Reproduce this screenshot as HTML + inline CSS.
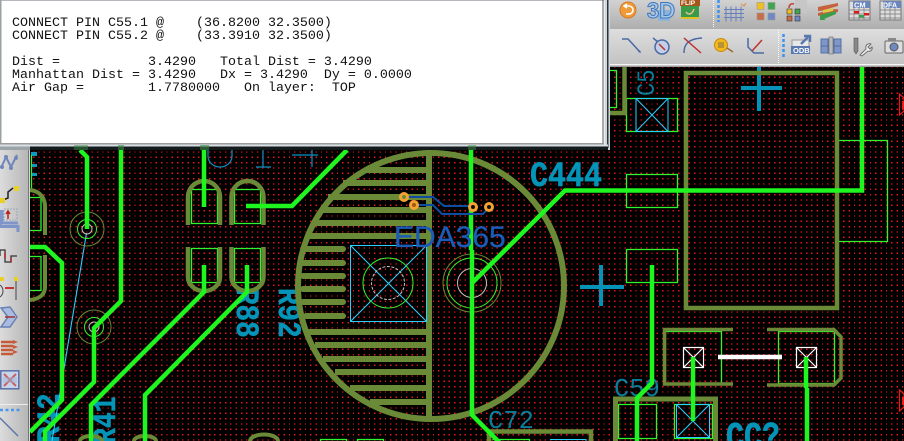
<!DOCTYPE html>
<html><head><meta charset="utf-8"><style>
html,body{margin:0;padding:0;background:#000}
#r{position:relative;width:904px;height:441px;overflow:hidden}
svg{position:absolute;left:0;top:0}
pre{position:absolute;left:12px;top:17px;margin:0;font:13.33px/13px "Liberation Mono",monospace;color:#111}
</style></head><body><div id="r">
<svg width="904" height="441" viewBox="0 0 904 441" font-family="Liberation Mono, monospace">
<defs>
<linearGradient id="tb1" x1="0" y1="0" x2="0" y2="1"><stop offset="0" stop-color="#d2d2d2"/><stop offset="1" stop-color="#aeaeae"/></linearGradient>
<linearGradient id="tb2" x1="0" y1="0" x2="0" y2="1"><stop offset="0" stop-color="#dedede"/><stop offset="1" stop-color="#c2c2c2"/></linearGradient>
<linearGradient id="lb" x1="0" y1="0" x2="1" y2="0"><stop offset="0" stop-color="#dcdcdc"/><stop offset="1" stop-color="#b6b6b6"/></linearGradient>
</defs>
<rect width="904" height="441" fill="#000"/>
<path fill="none" stroke="#f01018" stroke-width="1.4" stroke-dasharray="1.4 3.93" shape-rendering="crispEdges" d="M33 66.7H904M33 72H904M33 77.3H904M33 82.7H904M33 88H904M33 93.3H904M33 98.7H904M33 104H904M33 109.3H904M33 114.7H904M33 120H904M33 125.3H904M33 130.7H904M33 136H904M33 141.3H904M33 146.7H904M33 152H904M33 157.3H904M33 162.7H904M33 168H904M33 173.3H904M33 178.7H904M33 184H904M33 189.3H904M33 194.7H904M33 200H904M33 205.3H904M33 210.7H904M33 216H904M33 221.3H904M33 226.7H904M33 232H904M33 237.3H904M33 242.7H904M33 248H904M33 253.3H904M33 258.7H904M33 264H904M33 269.3H904M33 274.7H904M33 280H904M33 285.3H904M33 290.7H904M33 296H904M33 301.3H904M33 306.7H904M33 312H904M33 317.3H904M33 322.7H904M33 328H904M33 333.3H904M33 338.7H904M33 344H904M33 349.3H904M33 354.7H904M33 360H904M33 365.3H904M33 370.7H904M33 376H904M33 381.3H904M33 386.7H904M33 392H904M33 397.3H904M33 402.7H904M33 408H904M33 413.3H904M33 418.7H904M33 424H904M33 429.3H904M33 434.7H904M33 440H904"/>

<!-- teal labels -->
<g fill="#0494b8" font-weight="bold" stroke="#0494b8" stroke-width=".4">
<text transform="translate(530,186) scale(1.25,1.45)" font-size="24">C444</text>
<text transform="translate(237,288) rotate(90) scale(1.15,1.35)" font-size="24">R88</text>
<text transform="translate(279,288) rotate(90) scale(1.15,1.35)" font-size="24">R92</text>
<text transform="translate(115,444) rotate(-90) scale(1.1,1.35)" font-size="24">R41</text>
<text transform="translate(59,443) rotate(-90) scale(1.15,1.35)" font-size="24">R42</text>
<text transform="translate(726,448) scale(1.25,1.6)" font-size="24">CC?</text>
</g>
<g fill="#0a9cc0" fill-opacity=".8">
<text transform="translate(488,428) scale(1.5,1.55)" font-size="17">C72</text>
<text transform="translate(614,396) scale(1.5,1.55)" font-size="17">C59</text>
<text transform="translate(654,96) rotate(-90) scale(1.3,1.45)" font-size="17">C5</text>
</g>
<g fill="none" stroke="#0b8fc4" stroke-width="1.2">
<path d="M208 150v6a12 11 0 0 0 24 0v-6"/><path d="M263 150v17M256 167h15"/><path d="M292 155h26M312 150v17"/>
</g>
<path d="M31 152h6v4h-6zM31 164h6v3h-6zM31 173h6v3h-6z" fill="#0a9cc0"/>
<path d="M741 88h41M759 67v44M580 287h44M601 265v41" fill="none" stroke="#0494b8" stroke-width="4"/>

<!-- thin green -->
<g fill="none" stroke="#2ff52f" stroke-width="1.3">
<path d="M191.500 189.500h26v34h-26zM234.500 189.500h26v34h-26zM191.500 248.500h26v34h-26zM234.500 248.500h26v34h-26z"/>
<path d="M626.500 98.500h51v33h-51zM626.500 174.500h51v33h-51zM626.500 249.500h51v33h-51z"/>
<path d="M836.500 140.500h51v101h-51z"/>
<path d="M606 70.500h10.500v37H606"/>
<path d="M30 197.500h11v33H30M30 256.500h11v34H30M31.500 155v35"/>
<path d="M665.500 331.500h56v52h-56zM778.500 331.500h56v52h-56z"/>
<path d="M618.500 404.500h38v34h-38zM674.500 404.500h38v34h-38zM492.500 439.500h37v6M320.500 439.500h26v6h-26zM357.500 439.500h26v6h-26z"/>
</g>

<!-- olive -->
<g fill="none" stroke="#6a8a37">
<circle cx="431" cy="286" r="133" stroke-width="6"/>
<path d="M429 150V418" stroke-width="6"/>
<path stroke-width="6" d="M367 170H429M343 183H429M328 197H429M320 210H429M313 223H429M307 236H429M307 332H429M315 345H429M323 359H429M335 372H429M350 388H429M370 402H429"/>
<path stroke-width="6" stroke-linecap="round" d="M306 249H343M303 263H343M303 276H343M303 289H343M303 302H343M306 316H343"/>
<path stroke-width="4.500" d="M188 225V197a16 16 0 0 1 32 0V225M231.500 225V197a16 16 0 0 1 32 0V225"/>
<path stroke-width="4.500" d="M188 247v30a16 14 0 0 0 32 0V247M231.500 247v30a16 14 0 0 0 32 0V247"/>
<path stroke-width="4.500" d="M686 308V73H837V308ZM624.500 67V113H608"/>
<path stroke-width="4" d="M30 190c10 1 16 8 15 20v25M45 255v32c0 8-6 12-15 13"/>
<path stroke-width="3.500" d="M733 329.500H664.500V384H733M767 329.500H834L841 337V378L834 385H767"/>
<path stroke-width="5" d="M615.500 445V399H715.500V445"/>
<path stroke-width="4.500" d="M489 445V431.500H591V445"/>
<path stroke-width="4" d="M80 441a11 5 0 0 1 22 0M134 441a11 5 0 0 1 22 0M250 441a13 6 0 0 1 28 0"/>
</g>

<!-- cyan squares -->
<g fill="none" stroke="#2ad0ff" stroke-width="1">
<path d="M350.500 245.500h76v76h-76zM350.500 245.500l76 76M426.500 245.500l-76 76"/>
<path d="M636 98.500h32v33h-32zM636 98.500l32 33M668 98.500l-32 33"/>
<path d="M676.500 404.500h33v33h-33zM676.500 404.500l33 33M709.500 404.500l-33 33"/>
<path d="M550 439.500h36v6"/>
<path d="M86.500 233L52 441" stroke-width="1.100"/>
</g>

<!-- via rings -->
<g fill="none" stroke-width="1">
<circle cx="388" cy="283" r="25" stroke="#33f533"/>
<circle cx="388" cy="283" r="16.500" stroke="#c8c0c0" stroke-dasharray="3 1.500"/>
<circle cx="472" cy="283" r="29" stroke="#6a8a37"/>
<circle cx="472" cy="283" r="25" stroke="#33f533"/>
<circle cx="472" cy="283" r="14.500" stroke="#c8c0c0"/>
<circle cx="87" cy="229" r="17" stroke="#6a8a37"/>
<circle cx="87" cy="229" r="9.500" stroke="#33f533"/>
<circle cx="87" cy="229" r="5" stroke="#c8c0c0"/>
<circle cx="94" cy="327" r="17" stroke="#6a8a37"/>
<circle cx="94" cy="327" r="9.500" stroke="#33f533"/>
<circle cx="94" cy="327" r="5" stroke="#c8c0c0"/>
</g>

<!-- white pads -->
<g fill="none" stroke="#fff" stroke-width="1.200">
<path d="M683.500 347.500h20v20h-20zM683.500 347.500l20 20M703.500 347.500l-20 20"/>
<path d="M796.500 347.500h20v20h-20zM796.500 347.500l20 20M816.500 347.500l-20 20"/>
</g>

<!-- tracks -->
<g fill="none" stroke="#1ff51f" stroke-width="4.500" stroke-linejoin="miter">
<path d="M471 150V250M472 250V415L500 443"/>
<path d="M472 283L565 190.500H862V67"/>
<path d="M246 206H292L347 150"/>
<path d="M204 150V207M121 150V301L94 328V382L45 431V441M80 150L87 157V229"/>
<path d="M30 247H45L62 263V400L30 432"/>
<path d="M204 265V292L91 405V441M247 265V292L145 395V441"/>
<path d="M652 265V383L637 398V441M693 357V421M806 357V388M807 388V441"/>
</g>
<path d="M718 357H782" stroke="#fff" stroke-width="4.500"/>

<!-- red markers -->
<g fill="none" stroke="#f01818" stroke-width="1.200"><path d="M899.500 94v21l4.500-4V98zM899.500 390v21l4.500-4v-13z"/></g>
<path d="M902 101h2v8h-2zM902 397h2v8h-2z" fill="#f01818"/>

<!-- EDA365 logo -->
<g fill="none" stroke="#0d4ea3" stroke-width="2"><path d="M404 197H433L444 206H473M414 205H433L442 214H483L489 207"/></g>
<g fill="#111" stroke="#f5a233" stroke-width="3"><circle cx="404" cy="197" r="3.500" fill="#6a8a37"/><circle cx="414" cy="205" r="3.500" fill="#a05a10"/><circle cx="473" cy="207" r="3.500"/><circle cx="489" cy="207" r="3.500"/></g>
<text x="394" y="247" font-family="Liberation Sans, sans-serif" font-size="30" fill="#1a5cb8" stroke="#1a5cb8" stroke-width=".3">EDA365</text>

<!-- left toolbar -->
<rect x="0" y="146" width="28" height="295" fill="url(#lb)"/>
<rect x="28" y="146" width="1" height="295" fill="#777"/>
<rect x="29" y="146" width="1" height="295" fill="#d8d8d8"/>
<path d="M1 168L6 157L11 167L17 155" fill="none" stroke="#6f86ba" stroke-width="2"/>
<g fill="#6f86ba"><circle cx="2" cy="167" r="2"/><circle cx="11" cy="168" r="2"/><circle cx="16" cy="158" r="2"/><circle cx="6" cy="157" r="2"/></g>
<path d="M3 200L8 198V192L13 188" fill="none" stroke="#222" stroke-width="1.500"/>
<rect x="0" y="198" width="5" height="5" fill="#e8d028"/><rect x="14" y="186" width="5" height="5" fill="#e8d028"/>
<path d="M0 210V226.500H18V232M2 210V223H18" fill="none" stroke="#7d95c8" stroke-width="3"/>
<rect x="4" y="209" width="13" height="11" fill="none" stroke="#9ab" stroke-dasharray="2 1"/>
<path d="M8 219v-7m-2 2l2-3 2 3" fill="none" stroke="#b82020" stroke-width="1.500"/>
<path d="M0 256V250H5V262H11V256H17" fill="none" stroke="#333" stroke-width="1.300"/>
<path d="M5 253v5M11 258v4" stroke="#b82020" stroke-width="1.500"/>
<rect x="0" y="277" width="4" height="4" fill="#e8d028"/><rect x="14" y="277" width="4" height="4" fill="#e8d028"/>
<path d="M0 285C4 288 4 294 0 297M16 281V300" fill="none" stroke="#444" stroke-width="1"/>
<path d="M5 288H14" stroke="#c02525" stroke-width="1.800"/>
<path d="M1 308L10 307L17 317L10 327H1L8 317Z" fill="#a9bce0" stroke="#6880b4" stroke-width="1.500"/>
<path d="M5 317h10" stroke="#a03030" stroke-width="1.500"/>
<g stroke="#c75a38" stroke-width="2.500"><path d="M1 342H13M1 346H13M1 350H13M1 354H13"/></g>
<path d="M13 340l5 2-5 2zM13 345l5 2-5 2zM13 350l5 2-5 2z" fill="#c75a38"/>
<rect x="0.800" y="370.800" width="18" height="18" fill="#c8d4ea" stroke="#5670a8" stroke-width="1.500"/>
<path d="M4 374L16 386M16 374L4 386" stroke="#c86060" stroke-width="2"/>
<rect x="3" y="377" width="14" height="6" fill="#9fb3d6" opacity=".5"/>
<rect x="0" y="404" width="28" height="1" fill="#eee"/>
<path d="M0 410h20" stroke="#4a96ee" stroke-width="2.500" stroke-dasharray="3 2.500"/>
<path d="M0 418L18 436" stroke="#5c78a8" stroke-width="1.500"/>

<!-- top toolbar -->
<rect x="604" y="0" width="300" height="29" fill="url(#tb1)"/>
<rect x="604" y="29" width="300" height="36" fill="url(#tb2)"/>
<rect x="604" y="64" width="300" height="1.500" fill="#f4f4f4"/>
<rect x="604" y="65.500" width="300" height="1.500" fill="#9d9d9d"/>
<path d="M713.500 0V28M778.500 30V64" stroke="#fff" stroke-dasharray="1 1"/>
<path d="M718.500 0V22M783.500 34V58" stroke="#3a93f0" stroke-width="2.500" stroke-dasharray="3 2"/>
<!-- row1 -->
<circle cx="628" cy="10" r="8" fill="#ef9b3a" stroke="#d87a20"/>
<path d="M625 6h4a4 4 0 0 1 0 8h-3M627 4l-3 2 3 2" fill="none" stroke="#fff" stroke-width="1.600"/>
<rect x="658" y="10" width="12" height="11" fill="#8fb4dc"/>
<text x="647" y="18" font-size="22" font-weight="bold" font-family="Liberation Sans, sans-serif" fill="#a8c6e8" stroke="#3d78bc" stroke-width="1">3D</text>
<rect x="680" y="0" width="20" height="6" fill="#a85518"/>
<text x="681" y="5" font-size="6.500" font-weight="bold" fill="#fff" font-family="Liberation Sans, sans-serif">FLIP</text>
<rect x="681" y="6" width="18" height="11" fill="#3a9a48"/>
<path d="M686 12c2 3 6 3 8-3" fill="none" stroke="#e4c090" stroke-width="1.500"/>
<rect x="681" y="17" width="18" height="2" fill="#e0c020"/>
<path d="M726 6.500V21.500M731 6.500V21.500M736 6.500V21.500M741 6.500V21.500M724 9.500H744M724 13.500H744M724 17.500H744" stroke="#6580bc" stroke-width="1"/>
<path d="M741 4l3 2 2-3" fill="none" stroke="#d98c3c"/>
<rect x="757" y="2.500" width="7" height="7" fill="#f0c020" stroke="#999" stroke-width=".6"/>
<rect x="768" y="2.500" width="7" height="7" fill="#3fa54e" stroke="#999" stroke-width=".6"/>
<rect x="757" y="13" width="7" height="7" fill="#c96c47" stroke="#999" stroke-width=".6"/>
<rect x="768" y="13" width="7" height="7" fill="#7088c4" stroke="#999" stroke-width=".6"/>
<rect x="795" y="0" width="12" height="13" fill="#c6c6c6"/>
<rect x="787" y="9" width="5" height="5" fill="#f0c020" stroke="#333" stroke-width=".6"/><rect x="795" y="9" width="5" height="5" fill="#3fa54e" stroke="#333" stroke-width=".6"/>
<rect x="787" y="16" width="5" height="5" fill="#c96c47" stroke="#333" stroke-width=".6"/><rect x="795" y="16" width="5" height="5" fill="#7088c4" stroke="#333" stroke-width=".6"/>
<path d="M789 8c0-3 2-5 5-4" fill="none" stroke="#c04040" stroke-width="1.500"/>
<path d="M818 7L838 3V6L824 10L838 9V12L818 16V13L832 10L818 11Z" fill="#c6613f"/><path d="M820 15L836 11V14L824 19L826 20H820Z" fill="#3d9c4a"/><path d="M823 10L833 8V11L823 13Z" fill="#e0c84a"/>
<rect x="849" y="1" width="21" height="19" fill="#ddd" stroke="#777"/><rect x="853" y="1" width="17" height="7" fill="#6b86bc"/>
<text x="854" y="7.500" font-size="7.500" font-weight="bold" fill="#fff" font-family="Liberation Sans, sans-serif">CM</text>
<path d="M849 10h21M849 14h21M849 18h21M854 8v12M859 8v12M864 8v12" stroke="#777" stroke-width=".7"/>
<rect x="854" y="11" width="5" height="2.500" fill="#e01818"/><rect x="864" y="13" width="5" height="2.500" fill="#e01818"/><rect x="859" y="15" width="5" height="2.500" fill="#38a048"/>
<rect x="880" y="1" width="21" height="19" fill="#ddd" stroke="#777"/><rect x="883" y="1" width="18" height="7" fill="#6b86bc"/>
<text x="883" y="7.500" font-size="7" font-weight="bold" fill="#fff" font-family="Liberation Sans, sans-serif">DFA</text>
<path d="M880 10h21M880 14h21M880 18h21M885 8v12M890 8v12M895 8v12" stroke="#777" stroke-width=".7"/>
<!-- row2 -->
<path d="M622 39H628L640 52" fill="none" stroke="#4a6aa5" stroke-width="1.500"/><path d="M641 53l-3-1 2-2z" fill="#4a6aa5"/>
<path d="M653 38l5 4" stroke="#4a6aa5" stroke-width="1.500"/><circle cx="662" cy="47" r="7" fill="#c4cee6" stroke="#4a6aa5" stroke-width="1.500"/><path d="M659 44l6 6" stroke="#b93030" stroke-width="1.500"/>
<path d="M684 53c0-8 3-14 18-15" fill="none" stroke="#4a6aa5" stroke-width="1.500"/><path d="M684 38l17 15" stroke="#b93030" stroke-width="1.500"/>
<circle cx="721" cy="45" r="6.500" fill="#f2b81c" stroke="#c88a10"/><path d="M718 43h6M718 45h6M718 47h6" stroke="#555" stroke-width=".8"/><path d="M727 48l6 4" stroke="#9a6a30" stroke-width="1.500"/>
<path d="M748 38V47L754 53H764" fill="none" stroke="#4a6aa5" stroke-width="1.500"/><path d="M752 51L762 40" stroke="#c03030" stroke-width="1.500"/>
<rect x="792" y="40" width="17" height="9" fill="#e8e8e8" stroke="#999"/><rect x="791" y="46" width="19" height="8" fill="#5a78b0"/>
<text x="793" y="53" font-size="7.500" font-weight="bold" fill="#fff" font-family="Liberation Sans, sans-serif">ODB</text>
<path d="M801 44L808 37M804 36h6v6" fill="none" stroke="#5a78b0" stroke-width="2.500"/>
<rect x="821" y="39" width="20" height="14" fill="#7f97c6" stroke="#5670a8"/><path d="M828 39v14M834 39v14M821 46h20" stroke="#4a6299" stroke-width=".8"/><rect x="829" y="37" width="4" height="17" fill="#bbb" stroke="#666" stroke-width=".6"/>
<path d="M854 38h4v13l-2 3-2-3z" fill="#888" stroke="#555" stroke-width=".6"/>
<path d="M860 55L866 49C865 45 868 43 871 44L868 47L870 49L872 47C873 50 870 52 868 51L862 56Z" fill="#f0f0f0" stroke="#666" stroke-width=".9"/>
<rect x="885" y="41" width="18" height="12" rx="1" fill="#ddd" stroke="#666"/><circle cx="894" cy="47" r="4" fill="#6f8ac0" stroke="#555"/><rect x="888" y="38" width="8" height="3" fill="#888"/>

<!-- dialog frame -->
<rect x="600" y="0" width="10" height="150" fill="#cfd6dc"/>
<rect x="604" y="0" width="1" height="146" fill="#e8eef2"/>
<rect x="607" y="0" width="1.500" height="148" fill="#2c3236"/>
<rect x="0" y="0" width="604" height="144" fill="#fff"/>
<rect x="0" y="0" width="604" height="1" fill="#b4b8bc"/>
<rect x="0" y="0" width="1.500" height="144" fill="#9aa0a4"/>
<rect x="602.500" y="0" width="1" height="144" fill="#555"/>
<rect x="0" y="143" width="604" height="1.500" fill="#9a9a9a"/>
<rect x="0" y="144.500" width="608" height="2" fill="#d8e0e4"/>
<rect x="30" y="146.500" width="578" height="3.500" fill="#151a1c"/>
<rect x="0" y="146.500" width="30" height="3.500" fill="#9aa4a8"/>
<rect x="74" y="145" width="14" height="5" fill="#3b8a44" opacity=".5"/><rect x="118" y="145" width="6" height="5" fill="#3b8a44" opacity=".6"/><rect x="200" y="145" width="9" height="5" fill="#3b8a44" opacity=".6"/><rect x="468" y="145" width="8" height="5" fill="#3b8a44" opacity=".5"/>
</svg>
<pre>CONNECT PIN C55.1 @    (36.8200 32.3500)
CONNECT PIN C55.2 @    (33.3910 32.3500)

Dist =           3.4290   Total Dist = 3.4290
Manhattan Dist = 3.4290   Dx = 3.4290  Dy = 0.0000
Air Gap =        1.7780000   On layer:  TOP</pre>
</div></body></html>
